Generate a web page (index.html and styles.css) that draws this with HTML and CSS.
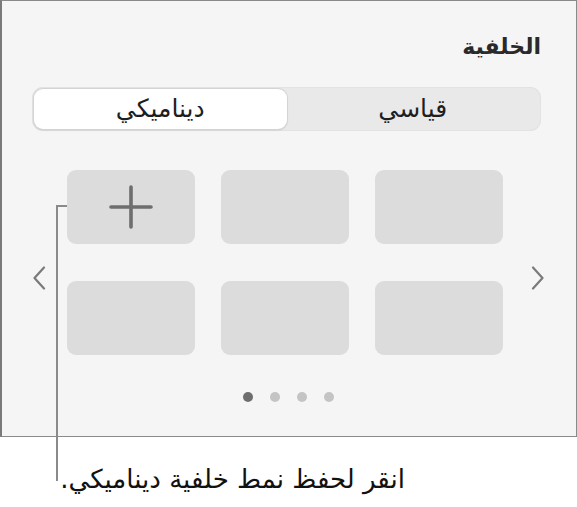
FILE: index.html
```html
<!DOCTYPE html>
<html lang="ar">
<head>
<meta charset="utf-8">
<link rel="stylesheet" href="styles.css">
</head>
<body>
<div class="panel">
  <h2 class="title" dir="rtl">الخلفية</h2>
  <div class="segmented" dir="rtl">
    <div class="seg">قياسي</div>
    <div class="seg seg-active">ديناميكي</div>
  </div>
  <div class="carousel">
    <svg class="chev" width="14" height="24" viewBox="0 0 14 24"><path d="M12 1.5 L2.5 12 L12 22.5" fill="none" stroke="#7a7a7a" stroke-width="2.2" stroke-linecap="round" stroke-linejoin="round"/></svg>
    <div class="grid">
      <div class="tile tile-add">
        <svg width="44" height="44" viewBox="0 0 44 44"><path d="M22 2 V42 M2 22 H42" stroke="#6e6e6e" stroke-width="3.6" stroke-linecap="round"/></svg>
      </div>
      <div class="tile"></div>
      <div class="tile"></div>
      <div class="tile"></div>
      <div class="tile"></div>
      <div class="tile"></div>
    </div>
    <svg class="chev chev-right" width="14" height="24" viewBox="0 0 14 24"><path d="M2 1.5 L11.5 12 L2 22.5" fill="none" stroke="#7a7a7a" stroke-width="2.2" stroke-linecap="round" stroke-linejoin="round"/></svg>
  </div>
  <div class="dots">
    <span class="dot dot-active"></span>
    <span class="dot"></span>
    <span class="dot"></span>
    <span class="dot"></span>
  </div>
</div>
<div class="callout-line"></div>
<p class="caption" dir="rtl">انقر لحفظ نمط خلفية ديناميكي.</p>
</body>
</html>
```
FILE: styles.css
```css
html, body {
  margin: 0;
  padding: 0;
  background: #ffffff;
}
body {
  position: relative;
  width: 577px;
  height: 507px;
  overflow: hidden;
  font-family: "DejaVu Sans", "Noto Sans", sans-serif;
}
.panel {
  box-sizing: border-box;
  width: 577px;
  height: 437px;
  background: #f5f5f5;
  border: 1px solid #8a8a8a;
  border-left: 2px solid #7a7a7a;
  padding: 34px 35px 0 30px;
}
.title {
  margin: 0;
  font-size: 22px;
  line-height: 24px;
  font-weight: bold;
  color: #2a2a2a;
  text-align: right;
}
.segmented {
  margin-top: 28px;
  display: flex;
  height: 44px;
  box-sizing: border-box;
  background: #e9e9e9;
  border-radius: 11px;
  padding: 2px;
  box-shadow: inset 0 0 0 1px #e2e2e2;
}
.seg {
  flex: 1;
  display: flex;
  align-items: center;
  justify-content: center;
  font-size: 25px;
  line-height: 30px;
  color: #1e1e1e;
  border-radius: 9px;
}
.seg-active {
  background: #ffffff;
  box-shadow: 0 0 0 1px #d4d4d4, 0 1px 2px rgba(0,0,0,0.18);
}
.carousel {
  margin-top: 39px;
  display: flex;
  align-items: center;
  justify-content: flex-start;
}
.chev {
  display: block;
  flex: none;
  margin-top: 30px;
}
.grid {
  flex: none;
  margin-left: 21px;
  display: grid;
  grid-template-columns: repeat(3, 128px);
  grid-auto-rows: 74px;
  column-gap: 26px;
  row-gap: 37px;
}
.chev-right {
  margin-left: 28px;
}
.tile {
  background: #dcdcdc;
  border-radius: 9px;
}
.tile-add {
  display: flex;
  align-items: center;
  justify-content: center;
}
.dots {
  margin-top: 37px;
  display: flex;
  justify-content: center;
  gap: 17px;
  padding-left: 4px;
}
.dot {
  width: 10px;
  height: 10px;
  border-radius: 50%;
  background: #c4c4c4;
}
.dot-active {
  background: #6e6e6e;
}
.callout-line {
  position: absolute;
  left: 56px;
  top: 205px;
  width: 9px;
  height: 274px;
  border-left: 2px solid #8a8a8a;
  border-top: 2px solid #8a8a8a;
}
.caption {
  margin: 0;
  width: 405px;
  padding-top: 24px;
  font-size: 26px;
  line-height: 36px;
  color: #111111;
  text-align: right;
}
```
